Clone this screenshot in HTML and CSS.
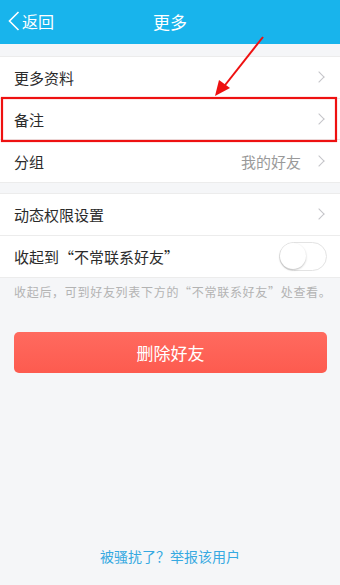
FILE: index.html
```html
<!DOCTYPE html>
<html lang="zh">
<head>
<meta charset="utf-8">
<link rel="stylesheet" href="styles.css">
</head>
<body>
<div class="page">
  <header class="nav">
    <div class="back">
      <svg class="back-ico" width="14" height="20" viewBox="0 0 14 20"><path d="M11.5 1 L2.5 10 L11.5 19" fill="none" stroke="#fff" stroke-width="1.6"/></svg>
      <span>返回</span>
    </div>
    <div class="title">更多</div>
  </header>

  <section class="group g1">
    <div class="row"><span class="label">更多资料</span><span class="chev"></span></div>
    <div class="row"><span class="label">备注</span><span class="chev"></span></div>
    <div class="row"><span class="label">分组</span><span class="value">我的好友</span><span class="chev"></span></div>
  </section>

  <section class="group g2">
    <div class="row"><span class="label">动态权限设置</span><span class="chev"></span></div>
    <div class="row"><span class="label">收起到“不常联系好友”</span><span class="toggle"><span class="knob"></span></span></div>
  </section>
  <p class="note">收起后，可到好友列表下方的“不常联系好友”处查看。</p>

  <div class="btn-wrap"><div class="btn-del">删除好友</div></div>

  <div class="footer">被骚扰了？举报该用户</div>

  <svg class="annot" width="340" height="585" viewBox="0 0 340 585">
    <rect x="2" y="98" width="334" height="43" fill="none" stroke="#ee1111" stroke-width="2.2"/>
    <line x1="263" y1="37" x2="222" y2="89" stroke="#ee1111" stroke-width="2"/>
    <polygon points="215,96 219,80 230,88" fill="#ee1111"/>
  </svg>
</div>
</body>
</html>
```

FILE: styles.css
```css
* { box-sizing: border-box; }
html, body { margin: 0; padding: 0; }
body {
  font-family: "Noto Sans CJK SC", "Noto Sans", sans-serif;
  background: #f5f6f8;
  color: #333;
}
.page {
  position: relative;
  width: 340px;
  height: 585px;
  display: flex;
  flex-direction: column;
  overflow: hidden;
}
.nav {
  height: 44px;
  background: #18b4ec;
  color: #fff;
  display: flex;
  align-items: center;
  position: relative;
  flex-shrink: 0;
}
.back {
  display: flex;
  align-items: center;
  padding-left: 7px;
  font-size: 16px;
  gap: 1px;
  margin-top: -2px;
}
.back-ico { display: block; }
.title {
  position: absolute;
  left: 0; right: 0;
  top: 0; bottom: 0;
  display: flex;
  align-items: center;
  justify-content: center;
  font-size: 17px;
  margin-top: -2px;
  pointer-events: none;
}
.group {
  background: #fff;
  border-top: 1px solid #ececec;
  border-bottom: 1px solid #ececec;
}
.g1 { margin-top: 12px; }
.g2 { margin-top: 10px; }
.row {
  height: 41.7px;
  display: flex;
  align-items: center;
  padding: 0 14px;
  font-size: 15px;
  border-bottom: 1px solid #ececec;
}
.row:last-child { border-bottom: none; }
.label { flex: 1; color: #2b2b2b; }
.value { color: #9a9a9a; margin-right: 14px; }
.chev {
  width: 8px;
  height: 8px;
  border-top: 1.3px solid #c4c4c8;
  border-right: 1.3px solid #c4c4c8;
  transform: rotate(45deg);
  margin-right: 3px;
}
.toggle {
  width: 48px;
  height: 29px;
  border-radius: 15px;
  border: 1.5px solid #e3e3e3;
  position: relative;
  margin-right: -1px;
}
.knob {
  position: absolute;
  left: 0; top: 0;
  width: 26px;
  height: 26px;
  border-radius: 50%;
  background: #fff;
  box-shadow: 0 1px 2px rgba(0,0,0,0.25);
}
.note {
  margin: 6px 0 0;
  padding: 0 14px;
  font-size: 12px;
  line-height: 16px;
  color: #b3b3b3;
  letter-spacing: 0.7px;
  white-space: nowrap;
}
.btn-wrap { padding: 32px 13px 0 14px; }
.btn-del {
  height: 41px;
  border-radius: 5px;
  background: linear-gradient(#ff6a5f, #fd5b4f);
  color: #fff;
  font-size: 17px;
  display: flex;
  align-items: center;
  justify-content: center;
}
.footer {
  margin-top: auto;
  margin-bottom: 19px;
  text-align: center;
  font-size: 14px;
  color: #36a9e1;
}
.annot {
  position: absolute;
  left: 0; top: 0;
  pointer-events: none;
}
```
